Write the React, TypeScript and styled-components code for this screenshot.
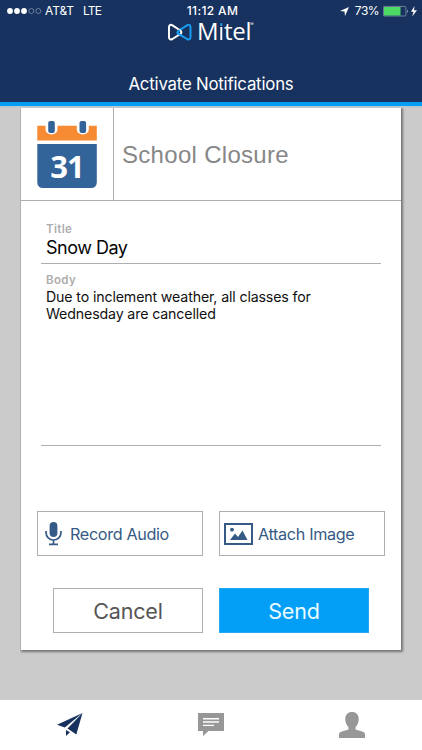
import React from "react";
import styled, { createGlobalStyle } from "styled-components";

const navy = "#17325e";
const sky = "#039ff6";
const steel = "#355a85";
const line = "#acaeb0";

const GlobalStyle = createGlobalStyle`
  * { box-sizing: border-box; }
  body { margin: 0; background: #cbcbcb; font-family: Inter, "Liberation Sans", sans-serif; }
  button { font-family: inherit; padding: 0; margin: 0; border-radius: 0; }
  svg { display: block; flex: none; }
`;

const Screen = styled.div`
  width: 422px;
  height: 750px;
  display: flex;
  flex-direction: column;
  background: #cbcbcb;
  overflow: hidden;
`;

const Header = styled.header`
  height: 106px;
  flex: none;
  background: ${navy};
  border-bottom: 4px solid ${sky};
  color: #fff;
`;

const StatusBar = styled.div`
  height: 20px;
  display: grid;
  grid-template-columns: 1fr 54px 1fr;
  padding: 2px 4px 0 7px;
  font-size: 12px;
  line-height: 18px;
  white-space: nowrap;
`;

const StatusGroup = styled.div<{ $end?: boolean }>`
  display: flex;
  align-items: center;
  justify-content: ${(p) => (p.$end ? "flex-end" : "flex-start")};
`;

const Carrier = styled.span`
  margin-left: 3px;
  letter-spacing: -0.1px;
`;

const Network = styled.span`
  margin-left: 9px;
  letter-spacing: -0.8px;
`;

const Clock = styled.div`
  text-align: center;
  font-weight: 500;
  letter-spacing: 0.35px;
`;

const Percent = styled.span`
  margin: 0 4px 0 6px;
  letter-spacing: -0.55px;
`;

const Brand = styled.div`
  height: 28px;
  display: flex;
  align-items: flex-start;
  padding-left: 167px;
`;

const BrandName = styled.span`
  margin-left: 5px;
  font-family: "Open Sans", sans-serif;
  font-weight: 500;
  font-size: 24px;
  line-height: 22px;
  letter-spacing: -0.3px;
`;

const AccentLetter = styled.span`
  background: linear-gradient(${sky} 0 11px, #fff 11px);
  background-clip: text;
  color: transparent;
`;

const Registered = styled.span`
  font-size: 5px;
  line-height: 8px;
  margin-left: -1px;
`;

const ScreenTitle = styled.h1`
  margin: 25px 0 0;
  text-align: center;
  font-weight: 400;
  font-size: 16.8px;
  line-height: 22px;
  letter-spacing: -0.2px;
`;

const Content = styled.main`
  flex: 1;
  padding: 2px 21px 0;
  background: linear-gradient(#bcc8d0 2px, #cbcbcb 2px);
`;

const Card = styled.section`
  width: 380px;
  height: 542px;
  background: #fff;
  box-shadow: 1px 1px 2px 1px #777;
  clip-path: inset(0 -5px -5px -1px);
`;

const CardHeader = styled.div`
  height: 93px;
  display: flex;
  border-bottom: 1px solid ${line};
`;

const IconCell = styled.div`
  width: 93px;
  border-right: 1px solid ${line};
  padding: 11px 0 0 16px;
`;

const CardTitle = styled.h2`
  margin: 0;
  padding-left: 8px;
  font-family: "Liberation Sans", sans-serif;
  font-weight: 400;
  font-size: 24px;
  line-height: 93px;
  color: #878787;
  letter-spacing: 0.3px;
`;

const Field = styled.div<{ $height: number }>`
  height: ${(p) => p.$height}px;
  margin: 0 20px;
  padding-left: 5px;
  border-bottom: 1px solid ${line};
`;

const Label = styled.div<{ $top: number }>`
  padding-top: ${(p) => p.$top}px;
  font-size: 11.5px;
  line-height: 14px;
  font-weight: 600;
  letter-spacing: 0.35px;
  color: #adadad;
`;

const TitleValue = styled.div`
  margin-top: 1px;
  font-size: 18px;
  line-height: 22px;
  letter-spacing: -0.5px;
  color: #050505;
`;

const BodyValue = styled.div`
  margin-top: 1px;
  font-size: 14.2px;
  line-height: 17.3px;
  letter-spacing: -0.14px;
  color: #111;
  white-space: pre;
`;

const ButtonRow = styled.div<{ $top: number; $inset: number }>`
  display: grid;
  grid-template-columns: minmax(0, 1fr) minmax(0, 1fr);
  gap: 16px;
  padding: ${(p) => p.$top}px ${(p) => p.$inset}px 0;
`;

const Attachment = styled.button<{ $pad: number; $gap: number }>`
  height: 45px;
  display: flex;
  align-items: center;
  gap: ${(p) => p.$gap}px;
  padding-left: ${(p) => p.$pad}px;
  border: 1px solid ${line};
  background: #fff;
  color: ${steel};
  font-size: 16.2px;
  letter-spacing: -0.35px;
  white-space: nowrap;
`;

const Action = styled.button<{ $primary?: boolean }>`
  height: 45px;
  border: 1px solid ${(p) => (p.$primary ? "#20a9ef" : line)};
  background: ${(p) => (p.$primary ? sky : "#fff")};
  color: ${(p) => (p.$primary ? "#e9fbff" : "#555")};
  font-size: 21.5px;
  letter-spacing: -0.15px;
`;

const TabBar = styled.nav`
  height: 50px;
  flex: none;
  display: grid;
  grid-template-columns: repeat(3, 1fr);
  background: #fff;
`;

const Tab = styled.div`
  display: flex;
  justify-content: center;
  padding-top: 12px;
`;

const SignalDots = () => (
  <svg width="35" height="8" viewBox="0 0 35 8">
    {[3, 10, 17].map((x) => <circle key={x} cx={x} cy="4" r="2.9" fill="#fff" />)}
    {[24.3, 31.3].map((x) => <circle key={x} cx={x} cy="4" r="2.5" fill="none" stroke="#8d9bb3" strokeWidth=".7" />)}
  </svg>
);

const LocationArrow = () => (
  <svg width="9" height="9" viewBox="0 0 9 9"><path d="M9 0 5 9 4.500 4.500 0 4Z" fill="#fff" /></svg>
);

const Battery = () => (
  <svg width="35" height="12" viewBox="0 0 35 12">
    <rect x=".4" y="1.400" width="22.500" height="9.600" rx="1" fill="none" stroke="#8795ae" strokeWidth=".8" />
    <rect x="1" y="2" width="16.500" height="8.500" fill="#4cd964" />
    <path d="M24 4.400a2 2 0 0 1 0 3.500Z" fill="#8795ae" />
    <path d="M31.500 1 28 6.800h2.500L29.200 11.500 34 5.200H31Z" fill="#fff" />
  </svg>
);

const MitelMark = () => (
  <svg width="25" height="22" viewBox="0 0 25 22" fill="none" strokeWidth="2" strokeLinejoin="round" strokeLinecap="round">
    <path d="M13.200 14.800 20 19Q23.500 20.500 23.500 17V7.500Q23.500 3.800 20 5.300L12 10.500Q9.200 12.200 11.500 14.200" stroke="#169df0" />
    <path d="M12.500 14.500 5.500 19Q2 20.500 2 17V7.500Q2 3.800 5.500 5.300L13.300 10.500Q15.800 12.400 12.500 14.500Z" stroke="#fff" />
    <path d="M13.200 14.800Q8.500 13 12 10.500" stroke="#169df0" />
  </svg>
);

const CalendarIcon = () => (
  <svg width="61" height="70" viewBox="0 0 61 70">
    <path d="M.3 6.800h59.500v14.700H.3Z" fill="#f68b33" />
    <path d="M8.500 6h12v4.500a6 5 0 0 1-12 0ZM39.800 6h12v4.500a6 5 0 0 1-12 0Z" fill="#fff" />
    <rect x="11.200" y="2" width="6.600" height="12" rx="2" fill="#336499" />
    <rect x="42.500" y="2" width="6.600" height="12" rx="2" fill="#336499" />
    <path d="M.3 25h59.500v38.500a5.500 5.500 0 0 1-5.500 5.500H5.800a5.500 5.500 0 0 1-5.500-5.500Z" fill="#336499" />
    <text x="30" y="58.500" textAnchor="middle" fontFamily="Open Sans" fontWeight="700" fontSize="31" letterSpacing="-1" fill="#fff">31</text>
  </svg>
);

const MicIcon = () => (
  <svg width="17" height="24" viewBox="0 0 17 24">
    <rect x="4.600" y="0" width="7.800" height="15" rx="3.900" fill={steel} />
    <path d="M1 9v1.500a7.500 7.500 0 0 0 15 0V9M8.500 18v4M4 22.300h9" fill="none" stroke={steel} strokeWidth="1.700" />
  </svg>
);

const ImageIcon = () => (
  <svg width="29" height="22" viewBox="0 0 29 22">
    <rect x="1" y="1" width="27" height="20" fill="none" stroke={steel} strokeWidth="2" />
    <circle cx="8" cy="6.700" r="1.900" fill={steel} />
    <path d="M6 17 11 10.500 14 14 18.500 7.500 23.500 17Z" fill={steel} />
  </svg>
);

const PlaneIcon = () => (
  <svg width="26" height="26" viewBox="0 0 26 26" fill={navy}>
    <path d="M25.500 1 0 12.800 7.800 15.500Z" />
    <path d="M25.500 1 10.500 16.500 19.300 22.500Z" />
    <path d="M9 18 13 20.200 9 24Z" />
  </svg>
);

const ChatIcon = () => (
  <svg width="26" height="26" viewBox="0 0 26 26">
    <path d="M0 1h26v18H10.500L5 24v-5H0Z" fill="#979797" />
    <path d="M5 6.700h16M5 10h16M5 13.400h11" stroke="#fff" strokeWidth="1.400" />
  </svg>
);

const PersonIcon = () => (
  <svg width="26" height="26" viewBox="0 0 26 26">
    <path d="M13 0c4.300 0 6.700 2.700 6.700 7 0 3.500-1.200 6.300-3.200 8.200v2.200l7.500 2.400Q26 20.500 26 22.500V26H0v-3.500q0-2 2-2.700l7.500-2.400v-2.200C7.500 13.300 6.300 10.500 6.300 7 6.300 2.700 8.700 0 13 0Z" fill="#979797" />
  </svg>
);

export default function App() {
  return (
    <>
      <GlobalStyle />
      <Screen>
        <Header>
          <StatusBar>
            <StatusGroup><SignalDots /><Carrier>AT&amp;T</Carrier><Network>LTE</Network></StatusGroup>
            <Clock>11:12 AM</Clock>
            <StatusGroup $end><LocationArrow /><Percent>73%</Percent><Battery /></StatusGroup>
          </StatusBar>
          <Brand>
            <MitelMark />
            <BrandName>M<AccentLetter>i</AccentLetter>tel</BrandName>
            <Registered>®</Registered>
          </Brand>
          <ScreenTitle>Activate Notifications</ScreenTitle>
        </Header>
        <Content>
          <Card>
            <CardHeader>
              <IconCell><CalendarIcon /></IconCell>
              <CardTitle>School Closure</CardTitle>
            </CardHeader>
            <Field $height={63}>
              <Label $top={21}>Title</Label>
              <TitleValue>Snow Day</TitleValue>
            </Field>
            <Field $height={182}>
              <Label $top={9}>Body</Label>
              <BodyValue>{"Due to inclement weather, all classes for\nWednesday are cancelled"}</BodyValue>
            </Field>
            <ButtonRow $top={65} $inset={16}>
              <Attachment $pad={7} $gap={8}><MicIcon />Record Audio</Attachment>
              <Attachment $pad={4} $gap={5}><ImageIcon />Attach Image</Attachment>
            </ButtonRow>
            <ButtonRow $top={32} $inset={32}>
              <Action>Cancel</Action>
              <Action $primary>Send</Action>
            </ButtonRow>
          </Card>
        </Content>
        <TabBar>
          <Tab><PlaneIcon /></Tab>
          <Tab><ChatIcon /></Tab>
          <Tab><PersonIcon /></Tab>
        </TabBar>
      </Screen>
    </>
  );
}
